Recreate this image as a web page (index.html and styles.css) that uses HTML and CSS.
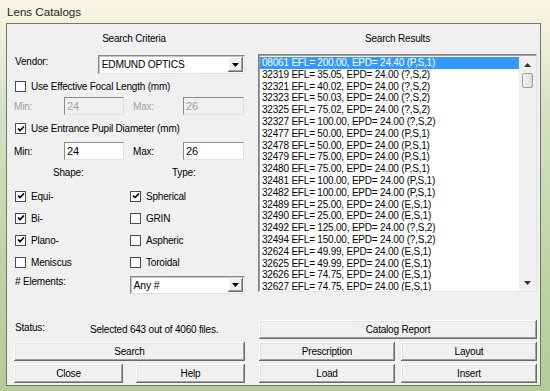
FILE: index.html
```html
<!DOCTYPE html>
<html lang="en">
<head>
    <meta charset="UTF-8">
    <title>Lens Catalogs</title>
    <link rel="stylesheet" href="styles.css">
</head>
<body>
<div class="window">
    <div class="window__title">Lens Catalogs</div>
    <div class="client">
        <div class="col col_left">
            <div class="head head_left">Search Criteria</div>
            <div class="row row_vendor">
                <span class="lbl lbl_vendor">Vendor:</span>
                <div class="combo combo_vendor">
                    <span class="combo__text">EDMUND OPTICS</span>
                    <span class="combo__btn"><svg width="7" height="4" viewBox="0 0 7 4"><path d="M0 0H7L3.5 4Z" fill="#000"/></svg></span>
                </div>
            </div>
            <label class="row row_cb1 check">
                <span class="cb"></span>Use Effective Focal Length (mm)
            </label>
            <div class="row row_mm">
                <span class="lbl lbl_min lbl_off">Min:</span>
                <span class="field field_min field_off">24</span>
                <span class="lbl lbl_max lbl_off">Max:</span>
                <span class="field field_max field_off">26</span>
            </div>
            <label class="row row_cb2 check">
                <span class="cb cb_on"><svg width="8" height="8" viewBox="0 0 8 8"><path d="M1 3.5L3 5.5L7 1.5" fill="none" stroke="#000" stroke-width="1.7"/></svg></span>Use Entrance Pupil Diameter (mm)
            </label>
            <div class="row row_mm">
                <span class="lbl lbl_min">Min:</span>
                <span class="field field_min">24</span>
                <span class="lbl lbl_max">Max:</span>
                <span class="field field_max">26</span>
            </div>
            <div class="row row_cap">
                <span class="cap cap_shape">Shape:</span>
                <span class="cap cap_type">Type:</span>
            </div>
            <div class="opts">
                <label class="check"><span class="cb cb_on"><svg width="8" height="8" viewBox="0 0 8 8"><path d="M1 3.5L3 5.5L7 1.5" fill="none" stroke="#000" stroke-width="1.7"/></svg></span>Equi-</label>
                <label class="check"><span class="cb cb_on"><svg width="8" height="8" viewBox="0 0 8 8"><path d="M1 3.5L3 5.5L7 1.5" fill="none" stroke="#000" stroke-width="1.7"/></svg></span>Spherical</label>
                <label class="check"><span class="cb cb_on"><svg width="8" height="8" viewBox="0 0 8 8"><path d="M1 3.5L3 5.5L7 1.5" fill="none" stroke="#000" stroke-width="1.7"/></svg></span>Bi-</label>
                <label class="check"><span class="cb"></span>GRIN</label>
                <label class="check"><span class="cb cb_on"><svg width="8" height="8" viewBox="0 0 8 8"><path d="M1 3.5L3 5.5L7 1.5" fill="none" stroke="#000" stroke-width="1.7"/></svg></span>Plano-</label>
                <label class="check"><span class="cb"></span>Aspheric</label>
                <label class="check"><span class="cb"></span>Meniscus</label>
                <label class="check"><span class="cb"></span>Toroidal</label>
            </div>
            <div class="row row_elem">
                <span class="lbl lbl_elem"># Elements:</span>
                <div class="combo combo_elem">
                    <span class="combo__text">Any #</span>
                    <span class="combo__btn"><svg width="7" height="4" viewBox="0 0 7 4"><path d="M0 0H7L3.5 4Z" fill="#000"/></svg></span>
                </div>
            </div>
            <div class="bottom">
                <div class="row row_status">
                    <span class="lbl lbl_status">Status:</span>
                    <span class="status">Selected 643 out of 4060 files.</span>
                </div>
                <button class="btn">Search</button>
                <div class="pair pair_left">
                    <button class="btn">Close</button>
                    <button class="btn">Help</button>
                </div>
            </div>
        </div>
        <div class="col col_right">
            <div class="head">Search Results</div>
            <div class="list">
                <div class="list__items">
                    <div class="item item_sel">08061 EFL= 200.00, EPD= 24.40 (P,S,1)</div>
                    <div class="item">32319 EFL= 35.05, EPD= 24.00 (?,S,2)</div>
                    <div class="item">32321 EFL= 40.02, EPD= 24.00 (?,S,2)</div>
                    <div class="item">32323 EFL= 50.03, EPD= 24.00 (?,S,2)</div>
                    <div class="item">32325 EFL= 75.02, EPD= 24.00 (?,S,2)</div>
                    <div class="item">32327 EFL= 100.00, EPD= 24.00 (?,S,2)</div>
                    <div class="item">32477 EFL= 50.00, EPD= 24.00 (P,S,1)</div>
                    <div class="item">32478 EFL= 50.00, EPD= 24.00 (P,S,1)</div>
                    <div class="item">32479 EFL= 75.00, EPD= 24.00 (P,S,1)</div>
                    <div class="item">32480 EFL= 75.00, EPD= 24.00 (P,S,1)</div>
                    <div class="item">32481 EFL= 100.00, EPD= 24.00 (P,S,1)</div>
                    <div class="item">32482 EFL= 100.00, EPD= 24.00 (P,S,1)</div>
                    <div class="item">32489 EFL= 25.00, EPD= 24.00 (E,S,1)</div>
                    <div class="item">32490 EFL= 25.00, EPD= 24.00 (E,S,1)</div>
                    <div class="item">32492 EFL= 125.00, EPD= 24.00 (?,S,2)</div>
                    <div class="item">32494 EFL= 150.00, EPD= 24.00 (?,S,2)</div>
                    <div class="item">32624 EFL= 49.99, EPD= 24.00 (E,S,1)</div>
                    <div class="item">32625 EFL= 49.99, EPD= 24.00 (E,S,1)</div>
                    <div class="item">32626 EFL= 74.75, EPD= 24.00 (E,S,1)</div>
                    <div class="item">32627 EFL= 74.75, EPD= 24.00 (E,S,1)</div>
                </div>
                <div class="scroll">
                    <span class="scroll__arrow"><svg width="7" height="4" viewBox="0 0 7 4"><path d="M0 4H7L3.5 0Z" fill="#333"/></svg></span>
                    <span class="scroll__thumb"></span>
                    <span class="scroll__track"></span>
                    <span class="scroll__arrow"><svg width="7" height="4" viewBox="0 0 7 4"><path d="M0 0H7L3.5 4Z" fill="#333"/></svg></span>
                </div>
            </div>
            <div class="bottom">
                <button class="btn btn_report">Catalog Report</button>
                <div class="pair pair_right">
                    <button class="btn">Prescription</button>
                    <button class="btn">Layout</button>
                </div>
                <div class="pair pair_right">
                    <button class="btn">Load</button>
                    <button class="btn">Insert</button>
                </div>
            </div>
        </div>
    </div>
</div>
</body>
</html>
```

FILE: styles.css
```css
body {
    margin: 0;
    font-family: "Liberation Sans", Arial, sans-serif;
    font-size: 10px;
    letter-spacing: -0.2px;
    color: #000;
}
.window {
    width: 550px;
    height: 391px;
    box-sizing: border-box;
    padding: 0 9px 5px 6px;
    display: flex;
    flex-direction: column;
    background: linear-gradient(to bottom, #f7f5e4 0, #f3f1dc 30px, #d5e1c2 110px, #c0d4a8 260px, #b3cb98 100%);
}
.window__title {
    height: 23px;
    line-height: 24px;
    padding-left: 1px;
    font-size: 11.6px;
    letter-spacing: 0;
    color: #1e1e1e;
}
.client {
    flex: 1;
    display: flex;
    gap: 13px;
    padding: 0 3px 2px 7px;
    background: #f0f0f0;
    border: 1px solid #6e7a64;
}
.col {
    display: flex;
    flex-direction: column;
}
.col_left {
    width: 231px;
}
.col_right {
    width: 279px;
}
.head {
    height: 30px;
    line-height: 30px;
    text-align: center;
}
.head_left {
    padding-left: 9px;
}
.row {
    display: flex;
    align-items: center;
}
.row_vendor {
    height: 21px;
    align-items: flex-start;
}
.lbl_vendor {
    width: 83px;
    padding: 2px 0 0 1px;
    line-height: 12px;
}
.combo {
    display: flex;
    height: 19px;
    box-sizing: border-box;
    background: #fff;
    border: 1px solid;
    border-color: #8a8a8a #e0e0e0 #e0e0e0 #8a8a8a;
    box-shadow: inset 1px 1px #c4c4c4;
}
.combo_vendor {
    width: 148px;
    margin-top: 1px;
}
.combo__text {
    flex: 1;
    padding-left: 3px;
    line-height: 17px;
    font-size: 10.5px;
}
.combo_vendor .combo__text {
    font-size: 10.2px;
}
.combo__btn {
    width: 15px;
    margin: 1px;
    display: flex;
    align-items: center;
    justify-content: center;
    background: #f0f0f0;
    box-shadow: inset -1px -1px #696969, inset 1px 1px #fff, inset -2px -2px #a0a0a0;
}
.check {
    display: flex;
    align-items: center;
    gap: 5px;
    padding-left: 1px;
}
.cb {
    width: 11px;
    height: 11px;
    box-sizing: border-box;
    flex: none;
    display: flex;
    align-items: center;
    justify-content: center;
    background: #fff;
    border: 1px solid #4a4a4a;
}
.row_cb1 {
    height: 22px;
}
.row_cb2 {
    height: 27px;
}
.row_mm {
    height: 18px;
}
.lbl_off {
    color: #a0a0a0;
}
.lbl_min {
    width: 50px;
}
.lbl_max {
    width: 50px;
    padding-left: 9px;
}
.field {
    height: 18px;
    box-sizing: border-box;
    padding-left: 2px;
    line-height: 16px;
    font-size: 11px;
    background: #fff;
    border: 1px solid;
    border-color: #8a8a8a #e0e0e0 #e0e0e0 #8a8a8a;
}
.field_min {
    width: 60px;
}
.field_max {
    width: 61px;
}
.field_off {
    color: #a0a0a0;
    background: #f0f0f0;
}
.row_cap {
    height: 25px;
}
.cap_shape {
    width: 118px;
    padding-left: 39px;
    box-sizing: border-box;
}
.cap_type {
    padding-left: 40px;
}
.opts {
    display: grid;
    grid-template-columns: 115px 1fr;
    grid-auto-rows: 22px;
}
.row_elem {
    height: 18px;
    margin-top: 3px;
    align-items: flex-start;
}
.lbl_elem {
    width: 115px;
    padding-left: 1px;
    line-height: 12px;
}
.combo_elem {
    width: 116px;
    height: 18px;
}
.combo_elem .combo__text {
    line-height: 16px;
}
.bottom {
    margin-top: auto;
    display: flex;
    flex-direction: column;
    gap: 3px;
}
.row_status {
    height: 20px;
    margin-bottom: 2px;
}
.lbl_status {
    width: 75px;
    padding-left: 1px;
}
.status {
    font-size: 10px;
    padding-top: 4px;
}
.btn {
    height: 19px;
    padding: 0;
    font-family: inherit;
    font-size: 10px;
    letter-spacing: -0.2px;
    color: #000;
    background: #f0f0f0;
    border: none;
    box-shadow: inset -1px -1px #696969, inset 1px 1px #fff, inset -2px -2px #a0a0a0, inset 2px 2px #e3e3e3;
}
.pair {
    display: flex;
    justify-content: space-between;
}
.pair_left .btn {
    width: 109px;
}
.pair_right .btn {
    width: 136px;
}
.col_right .bottom {
    padding-left: 1px;
}
.list {
    height: 238px;
    box-sizing: border-box;
    display: flex;
    background: #fff;
    border: 1px solid;
    border-color: #7f7f7f #e3e3e3 #e3e3e3 #7f7f7f;
    box-shadow: inset 1px 1px #a0a0a0;
    overflow: hidden;
}
.list__items {
    flex: 1;
    padding: 2px 0 0 1px;
}
.item {
    height: 11.8px;
    line-height: 11.8px;
    padding-left: 2px;
    font-size: 10px;
    white-space: nowrap;
}
.item_sel {
    background: #3399ff;
    color: #fff;
}
.scroll {
    width: 17px;
    display: flex;
    flex-direction: column;
    align-items: center;
    background: #f0f0f0;
    margin: 1px 0 0;
}
.scroll__arrow {
    height: 17px;
    display: flex;
    align-items: center;
    justify-content: center;
}
.scroll__thumb {
    width: 9px;
    height: 13px;
    border: 1px solid #9c9c9c;
    border-radius: 2px;
    background: linear-gradient(to right, #f4f4f4, #dcdcdc);
}
.scroll__track {
    flex: 1;
}
```
